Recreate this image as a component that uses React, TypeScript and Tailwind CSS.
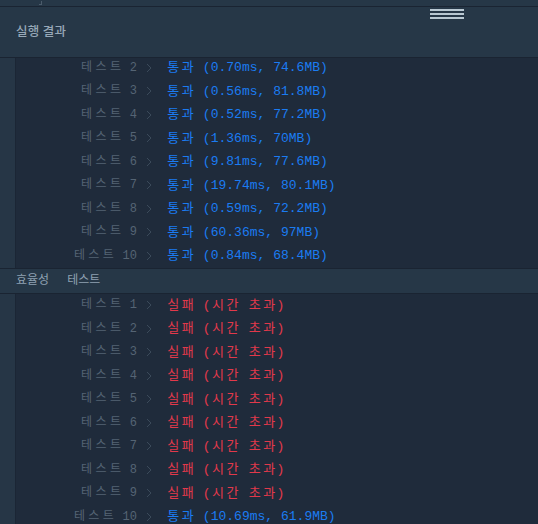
import React from 'react';

const mono = { fontFamily: "'Liberation Mono', 'Noto Sans CJK KR', monospace" };

// coding font style: Hangul glyphs get a wider fixed cell
const Cells = ({ text, cell }: { text: string; cell: string }) => (
  <>
    {Array.from(text).map((ch, i) =>
      /[\uac00-\ud7a3]/.test(ch) ? (
        <span key={i} className={`inline-block text-center ${cell}`}>
          {ch}
        </span>
      ) : (
        <span key={i}>{ch}</span>
      )
    )}
  </>
);

type Row = { n: number; pass: boolean; text: string };

const accuracy: Row[] = [
  { n: 1, pass: true, text: '(0.41ms, 74.1MB)' },
  { n: 2, pass: true, text: '(0.70ms, 74.6MB)' },
  { n: 3, pass: true, text: '(0.56ms, 81.8MB)' },
  { n: 4, pass: true, text: '(0.52ms, 77.2MB)' },
  { n: 5, pass: true, text: '(1.36ms, 70MB)' },
  { n: 6, pass: true, text: '(9.81ms, 77.6MB)' },
  { n: 7, pass: true, text: '(19.74ms, 80.1MB)' },
  { n: 8, pass: true, text: '(0.59ms, 72.2MB)' },
  { n: 9, pass: true, text: '(60.36ms, 97MB)' },
  { n: 10, pass: true, text: '(0.84ms, 68.4MB)' },
];

const efficiency: Row[] = [
  ...[1, 2, 3, 4, 5, 6, 7, 8, 9].map((n) => ({ n, pass: false, text: '(시간 초과)' })),
  { n: 10, pass: true, text: '(10.69ms, 61.9MB)' },
];

const Chevron = () => (
  <svg width="6" height="10" viewBox="0 0 6 10" className="ml-[9px] mr-[14px] shrink-0">
    <path d="M1 1 L5 5 L1 9" fill="none" stroke="#3b4a5a" strokeWidth="1" />
  </svg>
);

const ResultRow = ({ row }: { row: Row }) => (
  <div className="flex h-[23.5px] items-center whitespace-pre" style={mono}>
    <span className="w-[121px] text-right text-[12px] text-[#556474]">
      <Cells text={`테스트 ${row.n}`} cell="w-[2ch]" />
    </span>
    <Chevron />
    <span className={row.pass ? 'text-[13px] text-[#1b7cf2]' : 'text-[13px] text-[#e2394b]'}>
      <Cells text={`${row.pass ? '통과' : '실패'} ${row.text}`} cell="w-[14.5px]" />
    </span>
  </div>
);

const Block = ({ rows, offset }: { rows: Row[]; offset?: boolean }) => (
  <div className="flex">
    <div className="w-4 shrink-0 bg-[#263646] border-r border-[#1b2635]" />
    <div className="flex-1 overflow-hidden bg-[#1f2b3b]">
      <div className={offset ? '-mt-[25.5px]' : ''}>
        {rows.map((r) => (
          <ResultRow key={r.n} row={r} />
        ))}
      </div>
    </div>
  </div>
);

export default function App() {
  return (
    <div className="w-[538px] h-[524px] overflow-hidden bg-[#1f2b3b]">
      {/* top strip */}
      <div className="relative h-[7px] bg-[#263747] border-b border-[#1a2432]">
        <div className="absolute left-[39px] top-[1px] h-[4px] w-[3px] border-r border-b border-[#4b5b6b]" />
      </div>

      {/* header */}
      <div className="relative h-[51px] bg-[#263747] border-b border-[#1a2432] flex items-center pl-4">
        <div className="absolute left-[430px] top-[2px] w-[34px] flex flex-col gap-[2px]">
          <div className="h-[2px] bg-[#b9c8d3]" />
          <div className="h-[2px] bg-[#b9c8d3]" />
          <div className="h-[2px] bg-[#b9c8d3]" />
        </div>
        <span
          className="text-[12.5px] font-medium tracking-[0.3px] text-[#97a8b8] -mt-[2px]"
          style={{ fontFamily: "'Noto Sans CJK KR', sans-serif" }}
        >
          실행 결과
        </span>
      </div>

      <Block rows={accuracy} offset />

      {/* efficiency section header */}
      <div
        className="h-[26px] bg-[#263747] border-y border-[#1a2432] flex items-center pl-4 text-[12px] text-[#8fa1b2]"
        style={mono}
      >
        <span>효율성</span>
        <span className="ml-[18px]">테스트</span>
      </div>

      <Block rows={efficiency} />
    </div>
  );
}
